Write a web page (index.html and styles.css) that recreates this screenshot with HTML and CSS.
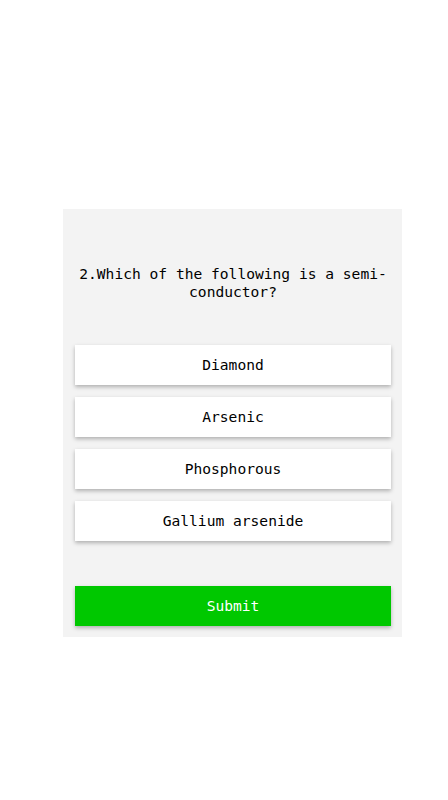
FILE: index.html
```html
<!DOCTYPE html>
<html>
<head>
<meta charset="utf-8">
<link rel="stylesheet" href="styles.css">
</head>
<body>
<div class="card">
  <p class="question">2.Which of the following is a semi-conductor?</p>
  <div class="options">
    <button class="option">Diamond</button>
    <button class="option">Arsenic</button>
    <button class="option">Phosphorous</button>
    <button class="option">Gallium arsenide</button>
  </div>
  <button class="submit">Submit</button>
</div>
</body>
</html>
```
FILE: styles.css
```css
html, body {
  margin: 0;
  padding: 0;
  background: #ffffff;
}
body {
  font-family: "DejaVu Sans Mono", "Liberation Mono", monospace;
  font-size: 14.6px;
  color: #000;
}
.card {
  box-sizing: border-box;
  margin: 209px 0 0 63px;
  width: 339px;
  background: #f3f3f3;
  padding: 56px 11px 11px 12px;
  display: flex;
  flex-direction: column;
}
.question {
  margin: 0;
  text-align: center;
  line-height: 18px;
  padding: 0 3px;
}
.options {
  margin-top: 44px;
  display: flex;
  flex-direction: column;
  gap: 12px;
}
.option, .submit {
  font-family: inherit;
  font-size: inherit;
  height: 40px;
  border: none;
  background: #ffffff;
  color: #000;
  box-shadow: 0 2px 4px rgba(0, 0, 0, 0.28);
  padding: 0 0 2px;
  text-align: center;
  width: 100%;
}
.submit {
  margin-top: 45px;
  background: #00c800;
  color: #ffffff;
}
```
